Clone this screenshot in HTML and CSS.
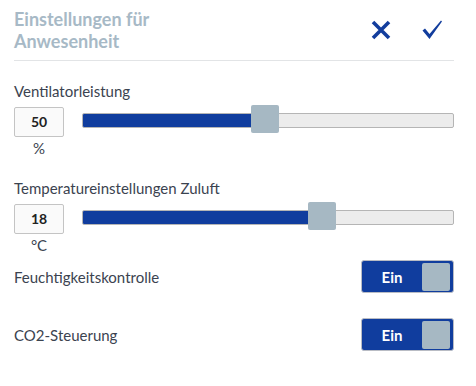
FILE: index.html
```html
<!DOCTYPE html>
<html lang="de">

<head>
    <meta charset="UTF-8">
    <title>Einstellungen für Anwesenheit</title>
    <link rel="stylesheet" href="styles.css">
</head>

<body>

<div class="panel">
    <div class="panel-header">
        <h2>Einstellungen für<br>Anwesenheit</h2>
        <div class="header-actions">
            <span class="icon-btn" title="Abbrechen">
                <svg width="20" height="20" viewBox="0 0 20 20">
                    <path d="M2 2 L18 18 M18 2 L2 18" stroke="#123d9d" stroke-width="3.6" fill="none"/>
                </svg>
            </span>
            <span class="icon-btn" title="Speichern">
                <svg width="22" height="22" viewBox="0 0 22 22">
                    <path d="M1.5 11.5 L4 9.5 L8.5 15 L20 1.5 L21 2.5 L8.5 20 Z" fill="#123d9d"/>
                </svg>
            </span>
        </div>
    </div>

    <!-- Slider: Ventilator -->
    <div class="setting">
        <div class="setting-label">Ventilatorleistung</div>
        <div class="slider-row">
            <div class="value-box">
                <div class="value">50</div>
                <div class="unit">%</div>
            </div>
            <div class="slider">
                <div class="slider-track">
                    <div class="slider-fill" style="width: calc((100% - 28px) * 0.49 + 14px)"></div>
                </div>
                <div class="slider-thumb" style="left: calc((100% - 28px) * 0.49)"></div>
            </div>
        </div>
    </div>

    <!-- Slider: Temperatur -->
    <div class="setting">
        <div class="setting-label">Temperatureinstellungen Zuluft</div>
        <div class="slider-row">
            <div class="value-box">
                <div class="value">18</div>
                <div class="unit">°C</div>
            </div>
            <div class="slider">
                <div class="slider-track">
                    <div class="slider-fill" style="width: calc((100% - 28px) * 0.657 + 14px)"></div>
                </div>
                <div class="slider-thumb" style="left: calc((100% - 28px) * 0.657)"></div>
            </div>
        </div>
    </div>

    <!-- Schalter -->
    <div class="toggle-row">
        <span class="toggle-label">Feuchtigkeitskontrolle</span>
        <div class="toggle">
            <span class="toggle-text">Ein</span>
            <span class="toggle-knob"></span>
        </div>
    </div>
    <div class="toggle-row">
        <span class="toggle-label">CO2-Steuerung</span>
        <div class="toggle">
            <span class="toggle-text">Ein</span>
            <span class="toggle-knob"></span>
        </div>
    </div>
</div>

</body>

</html>
```

FILE: styles.css
```css
* {
    box-sizing: border-box;
    font-family: 'Lato', 'Noto Sans', sans-serif;
}

body {
    margin: 0;
    padding: 0;
    background-color: #ffffff;
    color: #3b4350;
}

.panel {
    width: 476px;
    padding: 0 22px 0 14px;
}

/* KOPFZEILE */
.panel-header {
    display: flex;
    justify-content: space-between;
    align-items: center;
    height: 61px;
    border-bottom: 1px solid #e2e4e6;
}

h2 {
    margin: 0;
    font-size: 18px;
    line-height: 22px;
    font-weight: bold;
    color: #a7b9c6;
}

.header-actions {
    display: flex;
    align-items: center;
    gap: 30px;
    padding-right: 11px;
}

.icon-btn {
    display: flex;
    cursor: pointer;
}

/* SLIDER */
.setting {
    margin-top: 20px;
}

.setting-label {
    font-size: 15px;
    line-height: 20px;
}

.slider-row {
    display: flex;
    gap: 18px;
    margin-top: 6px;
}

.value-box {
    width: 50px;
    text-align: center;
}

.value {
    height: 30px;
    line-height: 28px;
    border: 1px solid #c4c4c4;
    border-radius: 2px;
    background-color: #fafafa;
    font-size: 14px;
    font-weight: bold;
    color: #222;
}

.unit {
    font-size: 15px;
    line-height: 20px;
    margin-top: 1px;
}

.slider {
    position: relative;
    flex: 1;
    height: 30px;
}

.slider-track {
    margin-top: 6px;
    height: 15px;
    background-color: #ececec;
    border: 1px solid #b5b5b5;
    border-radius: 2px;
    overflow: hidden;
}

.slider-fill {
    height: 100%;
    background-color: #103d9e;
}

.slider-thumb {
    position: absolute;
    top: -2px;
    width: 28px;
    height: 28px;
    background-color: #a6b8c3;
    border-radius: 2px;
}

/* SCHALTER */
.toggle-row {
    display: flex;
    justify-content: space-between;
    align-items: center;
    margin-top: 5px;
}

.toggle-row + .toggle-row {
    margin-top: 25px;
}

.toggle-label {
    font-size: 15px;
}

.toggle {
    display: flex;
    align-items: center;
    width: 93px;
    height: 33px;
    padding: 2px 3px 2px 0;
    background-color: #103d9e;
    border: 1px solid #b9bcc4;
    border-radius: 3px;
    cursor: pointer;
}

.toggle-text {
    flex: 1;
    text-align: center;
    color: #ffffff;
    font-weight: bold;
    font-size: 15px;
}

.toggle-knob {
    width: 28px;
    height: 28px;
    background-color: #a6b8c3;
    border-radius: 2px;
}
```
